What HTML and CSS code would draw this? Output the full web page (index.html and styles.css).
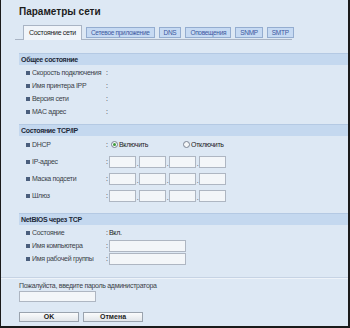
FILE: index.html
```html
<!DOCTYPE html>
<html lang="ru">
<head>
    <meta charset="UTF-8">
    <title>Параметры сети</title>
    <link rel="stylesheet" href="styles.css">
</head>
<body>
    <div class="page">
        <h1 class="title">Параметры сети</h1>

        <div class="tabs">
            <span class="tab active">Состояние сети</span>
            <span class="tab">Сетевое приложение</span>
            <span class="tab">DNS</span>
            <span class="tab">Оповещения</span>
            <span class="tab">SNMP</span>
            <span class="tab">SMTP</span>
        </div>

        <section class="section first">
            <div class="band">Общее состояние</div>
            <div class="rows">
                <div class="row"><span class="label">Скорость подключения</span><span class="colon">:</span></div>
                <div class="row"><span class="label">Имя принтера IPP</span><span class="colon">:</span></div>
                <div class="row"><span class="label">Версия сети</span><span class="colon">:</span></div>
                <div class="row"><span class="label">MAC адрес</span><span class="colon">:</span></div>
            </div>
        </section>

        <section class="section tcp">
            <div class="band">Состояние TCP/IP</div>
            <div class="rows">
                <div class="row tall">
                    <span class="label">DHCP</span><span class="colon">:</span>
                    <span class="radio checked"></span><span class="radio-text">Включить</span>
                    <span class="radio"></span><span class="radio-text">Отключить</span>
                </div>
                <div class="row tall">
                    <span class="label">IP-адрес</span><span class="colon">:</span>
                    <span class="ip"><input class="octet"><i>.</i><input class="octet"><i>.</i><input class="octet"><i>.</i><input class="octet"></span>
                </div>
                <div class="row tall">
                    <span class="label">Маска подсети</span><span class="colon">:</span>
                    <span class="ip"><input class="octet"><i>.</i><input class="octet"><i>.</i><input class="octet"><i>.</i><input class="octet"></span>
                </div>
                <div class="row tall">
                    <span class="label">Шлюз</span><span class="colon">:</span>
                    <span class="ip"><input class="octet"><i>.</i><input class="octet"><i>.</i><input class="octet"><i>.</i><input class="octet"></span>
                </div>
            </div>
        </section>

        <section class="section netbios">
            <div class="band">NetBIOS через TCP</div>
            <div class="rows">
                <div class="row"><span class="label">Состояние</span><span class="colon">:</span><span class="value">Вкл.</span></div>
                <div class="row"><span class="label">Имя компьютера</span><span class="colon">:</span><input class="field"></div>
                <div class="row"><span class="label">Имя рабочей группы</span><span class="colon">:</span><input class="field"></div>
            </div>
        </section>

        <div class="footer">
            <p class="hint">Пожалуйста, введите пароль администратора</p>
            <input class="field password" type="password">
            <div class="buttons">
                <button class="btn">OK</button>
                <button class="btn">Отмена</button>
            </div>
        </div>
    </div>
</body>
</html>
```

FILE: styles.css
```css
:root {
    --bg: #dde8f4;
    --band: #c4d8ef;
    --band-line: #b4c9e3;
    --text: #3a3f48;
    --dark: #1d2838;
    --tab: #c6daf3;
    --tab-border: #94add0;
    --field-border: #aeb6c2;
}

* {
    margin: 0;
    padding: 0;
    box-sizing: border-box;
    font-family: 'Liberation Sans', Arial, sans-serif;
}

body {
    width: 350px;
    height: 328px;
    overflow: hidden;
    background-color: var(--bg);
    color: var(--text);
    font-size: 7px;
    letter-spacing: -0.3px;
    border-left: 1px solid #1a1a1a;
    border-right: 2px solid #1a1a1a;
    border-bottom: 2px solid #1a1a1a;
}

.page {
    padding: 5px 0 0 18px;
}

.title {
    font-size: 10px;
    line-height: 13px;
    font-weight: bold;
    letter-spacing: 0;
    color: #1c1c1c;
}

.tabs {
    display: flex;
    align-items: flex-end;
    gap: 4px;
    margin: 7px 0 0 -4px;
    padding-left: 8px;
    width: 277px;
    height: 15px;
    border-bottom: 1px solid #a9b4c4;
}

.tab {
    height: 11px;
    line-height: 9px;
    padding: 0 4px;
    margin-bottom: 1px;
    background-color: var(--tab);
    border: 1px solid var(--tab-border);
    color: #3b58a0;
    font-size: 6.5px;
    white-space: nowrap;
}

.tab.active {
    height: 15px;
    line-height: 13px;
    padding: 0 5px;
    margin-bottom: -1px;
    background-color: #f1f5fa;
    border-color: #a9b4c4;
    border-bottom: none;
    color: #1c1c1c;
    font-size: 7px;
}

.section.first {
    margin-top: 13px;
}

.section.tcp {
    margin-top: 6px;
}

.section.netbios {
    margin-top: 9px;
}

.band {
    height: 12px;
    line-height: 11px;
    padding-left: 2px;
    background-color: var(--band);
    border-top: 1px solid var(--band-line);
    color: var(--dark);
    font-weight: bold;
}

.rows {
    padding-top: 1px;
}

.tcp .rows {
    padding-top: 0;
}

.row {
    display: flex;
    align-items: center;
    height: 13px;
    padding-left: 7px;
}

.row.tall {
    height: 17px;
}

.label {
    display: flex;
    align-items: center;
    flex-shrink: 0;
    width: 80px;
    white-space: nowrap;
}

.label::before {
    content: '';
    flex-shrink: 0;
    width: 4px;
    height: 4px;
    margin-right: 2px;
    background-color: #4a5e7c;
}

.colon {
    width: 3px;
    color: #222;
}

.value {
    color: #222;
}

.radio {
    width: 7px;
    height: 7px;
    margin: 0 1px 0 2px;
    border: 1px solid #7a8494;
    border-radius: 50%;
    background-color: #f4f6f8;
    display: flex;
    align-items: center;
    justify-content: center;
}

.radio.checked::after {
    content: '';
    width: 3px;
    height: 3px;
    border-radius: 50%;
    background-color: #3c9a3c;
}

.radio-text {
    width: 62px;
    color: #222;
}

.ip {
    display: flex;
    align-items: flex-end;
}

.ip i {
    width: 3px;
    font-style: normal;
    line-height: 8px;
    text-align: center;
}

.octet,
.field {
    height: 12px;
    background-color: #f3f6f9;
    border: 1px solid var(--field-border);
    outline: none;
}

.octet {
    width: 27px;
}

.field {
    width: 77px;
}

.footer {
    margin-top: 12px;
    margin-left: -18px;
    padding: 3px 0 0 18px;
    border-top: 1px solid #c6d3e4;
    box-shadow: inset 0 1px 0 #eef3f9;
}

.hint {
    line-height: 10px;
    color: #3a3f48;
}

.field.password {
    display: block;
    height: 11px;
}

.buttons {
    display: flex;
    gap: 4px;
    margin-top: 10px;
}

.btn {
    width: 60px;
    height: 10px;
    line-height: 8px;
    font-size: 7px;
    font-weight: bold;
    letter-spacing: 0;
    color: #1c1c1c;
    background: linear-gradient(#fafbfc, #e2e6ea);
    border: 1px solid #9aa3ae;
}
```
